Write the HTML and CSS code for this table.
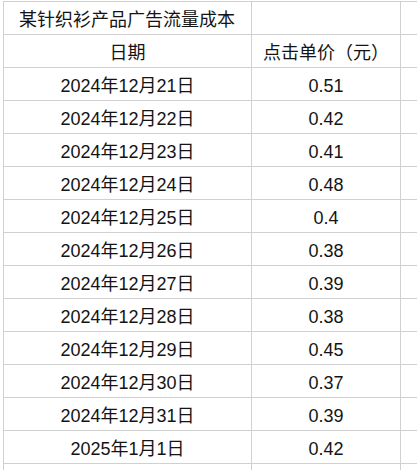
FILE: index.html
```html
<!DOCTYPE html>
<html lang="zh">
<head>
<meta charset="utf-8">
<title>某针织衫产品广告流量成本</title>
<link rel="stylesheet" href="styles.css">
</head>
<body>
<div class="sheet">
  <div class="cell title">某针织衫产品广告流量成本</div><div class="cell"></div><div class="cell"></div>
  <div class="cell">日期</div><div class="cell">点击单价（元）</div><div class="cell"></div>
  <div class="cell">2024年12月21日</div><div class="cell">0.51</div><div class="cell"></div>
  <div class="cell">2024年12月22日</div><div class="cell">0.42</div><div class="cell"></div>
  <div class="cell">2024年12月23日</div><div class="cell">0.41</div><div class="cell"></div>
  <div class="cell">2024年12月24日</div><div class="cell">0.48</div><div class="cell"></div>
  <div class="cell">2024年12月25日</div><div class="cell">0.4</div><div class="cell"></div>
  <div class="cell">2024年12月26日</div><div class="cell">0.38</div><div class="cell"></div>
  <div class="cell">2024年12月27日</div><div class="cell">0.39</div><div class="cell"></div>
  <div class="cell">2024年12月28日</div><div class="cell">0.38</div><div class="cell"></div>
  <div class="cell">2024年12月29日</div><div class="cell">0.45</div><div class="cell"></div>
  <div class="cell">2024年12月30日</div><div class="cell">0.37</div><div class="cell"></div>
  <div class="cell">2024年12月31日</div><div class="cell">0.39</div><div class="cell"></div>
  <div class="cell">2025年1月1日</div><div class="cell">0.42</div><div class="cell"></div>
  <div class="cell"></div><div class="cell"></div><div class="cell"></div>
</div>
</body>
</html>
```
FILE: styles.css
```css
html, body {
  margin: 0;
  padding: 0;
  background: #ffffff;
  overflow: hidden;
}
body {
  width: 417px;
  height: 471px;
  font-family: "Liberation Sans", "Noto Sans CJK SC", sans-serif;
  font-size: 18px;
  color: #141414;
}
.sheet {
  display: grid;
  grid-template-columns: 247px 148px 16px;
  grid-template-rows: repeat(14, 32px) 6px;
  gap: 1px;
  padding: 1px 0 0 1px;
  margin: 1px 0 0 3px;
  background: #d0d0d0;
  width: max-content;
}
.cell {
  background: #ffffff;
  display: flex;
  align-items: center;
  justify-content: center;
  padding-top: 3px;
  box-sizing: border-box;
  white-space: nowrap;
  line-height: 1;
  overflow: hidden;
}
.title {
  justify-content: flex-start;
  padding-left: 15px;
}
```
